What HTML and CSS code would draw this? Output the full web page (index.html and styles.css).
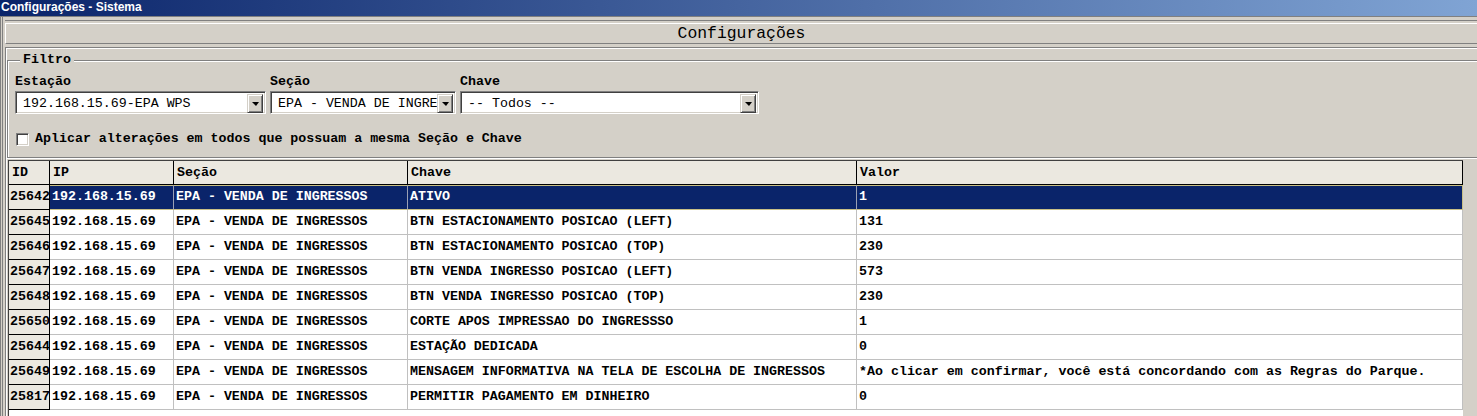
FILE: index.html
```html
<!DOCTYPE html>
<html lang="pt">
<head>
<meta charset="utf-8">
<title>Configurações - Sistema</title>
<link rel="stylesheet" href="styles.css">
</head>
<body>
<div class="titlebar">Configurações - Sistema</div>
<div class="frame">
  <div class="hdr"><div class="hdr-in">Configurações</div></div>
  <div class="main">
    <div class="group">
      <span class="legend">Filtro</span>
      <div class="filters">
        <div class="field f1">
          <div class="lbl">Estação</div>
          <div class="combo"><span class="ctext">192.168.15.69-EPA WPS</span><span class="cbtn"><i class="tri"></i></span></div>
        </div>
        <div class="field f2">
          <div class="lbl">Seção</div>
          <div class="combo"><span class="ctext">EPA - VENDA DE INGRE</span><span class="cbtn"><i class="tri"></i></span></div>
        </div>
        <div class="field f3">
          <div class="lbl">Chave</div>
          <div class="combo"><span class="ctext">-- Todos --</span><span class="cbtn"><i class="tri"></i></span></div>
        </div>
      </div>
      <div class="chkrow"><span class="chk"></span><span class="chklbl">Aplicar alterações em todos que possuam a mesma Seção e Chave</span></div>
    </div>
    <div class="grid">
      <div class="row head">
        <div class="c h">ID</div><div class="c h">IP</div><div class="c h">Seção</div><div class="c h">Chave</div><div class="c h">Valor</div>
      </div>
      <div class="row sel">
        <div class="c id">25642</div><div class="c first">192.168.15.69</div><div class="c">EPA - VENDA DE INGRESSOS</div><div class="c">ATIVO</div><div class="c">1</div>
      </div>
      <div class="row">
        <div class="c id">25645</div><div class="c">192.168.15.69</div><div class="c">EPA - VENDA DE INGRESSOS</div><div class="c">BTN ESTACIONAMENTO POSICAO (LEFT)</div><div class="c">131</div>
      </div>
      <div class="row">
        <div class="c id">25646</div><div class="c">192.168.15.69</div><div class="c">EPA - VENDA DE INGRESSOS</div><div class="c">BTN ESTACIONAMENTO POSICAO (TOP)</div><div class="c">230</div>
      </div>
      <div class="row">
        <div class="c id">25647</div><div class="c">192.168.15.69</div><div class="c">EPA - VENDA DE INGRESSOS</div><div class="c">BTN VENDA INGRESSO POSICAO (LEFT)</div><div class="c">573</div>
      </div>
      <div class="row">
        <div class="c id">25648</div><div class="c">192.168.15.69</div><div class="c">EPA - VENDA DE INGRESSOS</div><div class="c">BTN VENDA INGRESSO POSICAO (TOP)</div><div class="c">230</div>
      </div>
      <div class="row">
        <div class="c id">25650</div><div class="c">192.168.15.69</div><div class="c">EPA - VENDA DE INGRESSOS</div><div class="c">CORTE APOS IMPRESSAO DO INGRESSSO</div><div class="c">1</div>
      </div>
      <div class="row">
        <div class="c id">25644</div><div class="c">192.168.15.69</div><div class="c">EPA - VENDA DE INGRESSOS</div><div class="c">ESTAÇÃO DEDICADA</div><div class="c">0</div>
      </div>
      <div class="row">
        <div class="c id">25649</div><div class="c">192.168.15.69</div><div class="c">EPA - VENDA DE INGRESSOS</div><div class="c">MENSAGEM INFORMATIVA NA TELA DE ESCOLHA DE INGRESSOS</div><div class="c">*Ao clicar em confirmar, você está concordando com as Regras do Parque.</div>
      </div>
      <div class="row">
        <div class="c id">25817</div><div class="c">192.168.15.69</div><div class="c">EPA - VENDA DE INGRESSOS</div><div class="c">PERMITIR PAGAMENTO EM DINHEIRO</div><div class="c">0</div>
      </div>
    </div>
  </div>
</div>
</body>
</html>
```
FILE: styles.css
```css
html, body {
  margin: 0;
  height: 416px;
  overflow: hidden;
}
body {
  background: #d4d0c8;
  font-family: "Liberation Mono", monospace;
  font-size: 13.3px;
  color: #000;
}
.titlebar {
  height: 16px;
  line-height: 15px;
  padding-left: 1px;
  background: linear-gradient(to right, #0a246a, #80a4d4);
  color: #fff;
  font: bold 12px "Liberation Sans", Arial, sans-serif;
}
.frame {
  border-top: 1px solid #808080;
  padding-top: 3px;
  padding-left: 5px;
  height: 400px;
  background: linear-gradient(to right, #808080 0 1px, transparent 1px 2px, #808080 2px 3px, transparent 3px) no-repeat;
}
.hdr {
  border-top: 1px solid #808080;
  padding-top: 2px;
}
.hdr-in {
  border-top: 1px solid #fff;
  border-left: 1px solid #fff;
  border-bottom: 1px solid #808080;
  height: 19px;
  line-height: 19px;
  text-align: center;
  font-size: 16.4px;
}
.main {
  margin-top: 3px;
  border-top: 1px solid #808080;
  border-left: 1px solid #808080;
  box-shadow: inset 1px 1px 0 #fff;
  padding: 12px 0 0 1px;
  height: 400px;
}
.group {
  position: relative;
  border: 1px solid #808080;
  border-right: none;
  box-shadow: inset 1px 1px 0 #fff, 0 1px 0 #fff;
  padding: 14px 0 10px 7px;
  margin-right: -10px;
  margin-bottom: 2px;
}
.legend {
  position: absolute;
  top: -9px;
  left: 12px;
  padding: 0 3px;
  line-height: 16px;
  background: #d4d0c8;
  font-weight: bold;
}
.filters {
  display: flex;
  gap: 4px;
}
.f1 { width: 251px; }
.f2 { width: 186px; }
.f3 { width: 299px; }
.lbl {
  font-weight: bold;
  line-height: 14px;
  height: 14px;
  margin-bottom: 2px;
}
.combo {
  box-sizing: border-box;
  height: 23px;
  display: flex;
  background: #fff;
  border: 1px solid;
  border-color: #808080 #fff #fff #808080;
  box-shadow: inset 1px 1px 0 #404040, inset -1px -1px 0 #d4d0c8;
  padding: 2px;
}
.ctext {
  flex: 1;
  min-width: 0;
  overflow: hidden;
  white-space: nowrap;
  line-height: 19px;
  padding-left: 5px;
}
.cbtn {
  box-sizing: border-box;
  width: 16px;
  height: 19px;
  flex: none;
  background: #d4d0c8;
  border: 1px solid;
  border-color: #d4d0c8 #404040 #404040 #d4d0c8;
  box-shadow: inset 1px 1px 0 #fff, inset -1px -1px 0 #808080;
  display: flex;
  align-items: center;
  justify-content: center;
}
.tri {
  width: 0;
  height: 0;
  border-left: 4px solid transparent;
  border-right: 3px solid transparent;
  border-top: 4px solid #000;
  margin-top: 1px;
}
.chkrow {
  margin-top: 17px;
  height: 16px;
  display: flex;
  align-items: center;
}
.chk {
  box-sizing: border-box;
  width: 13px;
  height: 13px;
  margin-left: 1px;
  background: #fff;
  border: 1px solid;
  border-color: #808080 #fff #fff #808080;
  box-shadow: inset 1px 1px 0 #404040, inset -1px -1px 0 #d4d0c8;
}
.chklbl {
  margin-left: 6px;
  font-weight: bold;
  line-height: 16px;
}
.grid {
  margin-left: 1px;
  width: 1454px;
  border-top: 1px solid #404040;
  border-left: 1px solid #404040;
  background: #fff;
  height: 300px;
}
.row {
  display: grid;
  grid-template-columns: 41px 124px 234px 449px 606px;
}
.c {
  box-sizing: border-box;
  height: 25px;
  line-height: 24px;
  padding-left: 2px;
  border-right: 1px solid #c0c0c0;
  border-bottom: 1px solid #c0c0c0;
  white-space: nowrap;
  overflow: hidden;
  font-weight: bold;
}
.h {
  height: 24px;
  line-height: 23px;
  background: #ebe8e0;
  border-color: #000;
  padding-left: 3px;
}
.id {
  background: #ebe8e0;
  border-color: #000;
  padding-left: 1px;
}
.sel .c:not(.id) {
  background: #0a246a;
  color: #fff;
  border-bottom-color: #c8bf86;
  border-right-color: #9aa0b4;
  box-shadow: inset 0 1px 0 #c8bf86;
}
.sel .first {
  box-shadow: inset 0 1px 0 #c8bf86, inset 1px 0 0 #c8bf86;
}
.sel .c:last-child {
  border-right-color: #c8bf86;
}
```
